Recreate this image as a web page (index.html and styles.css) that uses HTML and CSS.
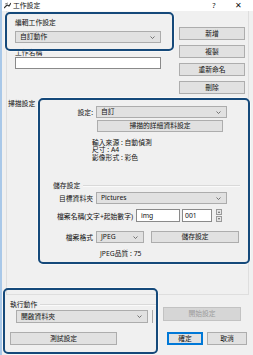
FILE: index.html
```html
<!DOCTYPE html>
<html lang="zh-Hant">
  <head>
    <meta charset="UTF-8" />
    <title>工作設定</title>
    <link rel="stylesheet" href="styles.css">
  </head>
  <body>
    <div class="window">
      <div class="titlebar">
        <svg class="app-icon" viewBox="0 0 7 7">
          <path d="M0 6 L3 3 L5 4 L7 1" fill="none" stroke="#333" stroke-width="1.2" />
          <path d="M1 2 L4 1" stroke="#888" stroke-width="1" />
        </svg>
        <span class="title">工作設定</span>
        <div class="title-btns">
          <span>?</span>
          <span>✕</span>
        </div>
      </div>

      <div class="panel">
        <div class="job">
          <div class="job-fields">
            <div class="field-label">編輯工作設定</div>
            <div class="combo">自訂動作<svg class="caret" viewBox="0 0 5 3"><path d="M0.5 0.5 L2.5 2.5 L4.5 0.5" /></svg></div>
            <div class="field-label name-label">工作名稱</div>
            <div class="textbox"></div>
          </div>
          <div class="job-buttons">
            <button>新增</button>
            <button>複製</button>
            <button>重新命名</button>
            <button>刪除</button>
          </div>
        </div>

        <div class="scan">
          <div class="section-label">掃描設定</div>
          <div class="scan-body">
            <div class="row">
              <span class="row-label">設定:</span>
              <div class="combo wide">自訂<svg class="caret" viewBox="0 0 5 3"><path d="M0.5 0.5 L2.5 2.5 L4.5 0.5" /></svg></div>
            </div>
            <button class="detail-btn">掃描的詳細資料設定</button>
            <div class="info">
              <div>輸入來源 : 自動偵測</div>
              <div>尺寸 : A4</div>
              <div>影像形式 : 彩色</div>
            </div>

            <div class="group save-group">
              <span>儲存設定</span>
              <span class="group-line"></span>
            </div>
            <div class="row folder-row">
              <span class="row-label">目標資料夾</span>
              <div class="combo wide">Pictures<svg class="caret" viewBox="0 0 5 3"><path d="M0.5 0.5 L2.5 2.5 L4.5 0.5" /></svg></div>
            </div>
            <div class="row name-row">
              <span class="row-label name">檔案名稱(文字+起始數字)</span>
              <div class="textbox prefix">img</div>
              <div class="textbox number">001</div>
              <div class="spin">
                <svg viewBox="0 0 6 6"><path d="M1.5 4 L3 2 L4.5 4 Z" /></svg>
                <svg viewBox="0 0 6 6"><path d="M1.5 2 L3 4 L4.5 2 Z" /></svg>
              </div>
            </div>
            <div class="row format-row">
              <span class="row-label">檔案格式</span>
              <div class="combo narrow">JPEG<svg class="caret" viewBox="0 0 5 3"><path d="M0.5 0.5 L2.5 2.5 L4.5 0.5" /></svg></div>
              <button class="save-btn">儲存設定</button>
            </div>
            <div class="quality">JPEG品質 : 75</div>
          </div>
        </div>
      </div>

      <div class="footer">
        <div class="footer-left">
          <div class="group">
            <span>執行動作</span>
            <span class="group-line"></span>
          </div>
          <div class="action-row">
            <div class="combo action">開啟資料夾<svg class="caret" viewBox="0 0 5 3"><path d="M0.5 0.5 L2.5 2.5 L4.5 0.5" /></svg></div>
            <span class="sep"></span>
          </div>
          <button class="test-btn">測試設定</button>
        </div>
        <div class="footer-right">
          <button class="start-btn" disabled>開始設定</button>
          <div class="dialog-btns">
            <button class="ok-btn">確定</button>
            <button class="cancel-btn">取消</button>
          </div>
        </div>
      </div>

      <div class="highlight hl-job"></div>
      <div class="highlight hl-scan"></div>
      <div class="highlight hl-action"></div>
    </div>
  </body>
</html>
```

FILE: styles.css
```css
* {
  margin: 0;
  padding: 0;
  box-sizing: border-box;
}

body {
  width: 253px;
  height: 355px;
  overflow: hidden;
  background: #fff;
  font-family: "Noto Sans", "Noto Sans CJK TC", sans-serif;
  font-size: 6.8px;
  color: #111;
}

.window {
  position: relative;
  width: 253px;
  height: 355px;
  background: #f0f0f0;
  border-left: 2px solid #a9c8e8;
}

/* title bar */
.titlebar {
  height: 11px;
  background: #fff;
  display: flex;
  align-items: center;
  padding-left: 2px;
}

.app-icon {
  width: 7px;
  height: 7px;
}

.title {
  margin-left: 2px;
  line-height: 9px;
}

.title-btns {
  margin-left: auto;
  padding-right: 3px;
  display: flex;
}

.title-btns span {
  width: 24px;
  text-align: center;
  font-size: 7.5px;
  line-height: 9px;
}

/* main panel */
.panel {
  margin-left: 4px;
  width: 243px;
  height: 284px;
  border: 1px solid #dedede;
  border-top: none;
}

.job {
  display: flex;
  padding: 7px 0 0 8px;
}

.job-fields {
  width: 146px;
}

.field-label {
  line-height: 9px;
  margin-bottom: 4px;
}

.name-label {
  margin: 5px 0 0;
}

.combo {
  position: relative;
  height: 12px;
  line-height: 10px;
  padding-left: 4px;
  background: #e1e1e1;
  border: 1px solid #acacac;
  white-space: nowrap;
}

.caret {
  position: absolute;
  right: 5px;
  top: 4px;
  width: 5px;
  height: 3px;
}

.caret path {
  fill: none;
  stroke: #555;
  stroke-width: 0.8;
}

.textbox {
  height: 12px;
  line-height: 10px;
  padding-left: 3px;
  background: #fff;
  border: 1px solid #8a8a8a;
}

button {
  display: block;
  font: inherit;
  color: inherit;
  height: 13px;
  line-height: 11px;
  background: #e1e1e1;
  border: 1px solid #adadad;
  text-align: center;
}

.job-buttons {
  margin: 9px 0 0 18px;
  width: 66px;
}

.job-buttons button {
  width: 66px;
  margin-bottom: 5px;
}

.job-buttons button:last-child {
  margin-bottom: 0;
}

/* scan settings */
.scan {
  display: flex;
  margin-top: 4px;
}

.section-label {
  width: 32px;
  padding: 1px 0 0 1px;
  line-height: 9px;
  white-space: nowrap;
}

.scan-body {
  padding-top: 8px;
}

.row {
  display: flex;
  align-items: center;
}

.row-label {
  width: 54px;
  margin-right: 3px;
  text-align: right;
  white-space: nowrap;
}

.combo.wide {
  width: 131px;
}

.detail-btn {
  margin: 2px 0 0 58px;
  width: 126px;
  height: 12px;
  line-height: 10px;
}

.info {
  margin: 6.5px 0 0 53px;
  line-height: 7.5px;
}

.group {
  display: flex;
  align-items: center;
  line-height: 9px;
  white-space: nowrap;
}

.group-line {
  flex: 1;
  height: 2px;
  margin-left: 3px;
  border-top: 1px solid #d9d9d9;
  border-bottom: 1px solid #fafafa;
}

.save-group {
  margin: 20px 0 0 14px;
  width: 187px;
}

.folder-row {
  margin-top: 2px;
}

.name-row {
  margin-top: 5px;
  height: 13px;
}

.row-label.name {
  width: 94px;
}

.name-row .textbox {
  height: 13px;
  line-height: 11px;
}

.textbox.prefix {
  width: 44px;
  padding-left: 4px;
}

.textbox.number {
  width: 30px;
  margin-left: 2px;
  padding-left: 2px;
}

.spin {
  width: 6px;
  height: 13px;
  margin-left: 4px;
  display: flex;
  flex-direction: column;
  gap: 1px;
}

.spin svg {
  width: 6px;
  height: 6px;
  background: #e6e6e6;
  border: 0.5px solid #9a9a9a;
}

.spin path {
  fill: #333;
}

.format-row {
  margin-top: 9px;
}

.combo.narrow {
  width: 48px;
}

.save-btn {
  width: 88px;
  height: 12px;
  line-height: 10px;
  margin-left: 7px;
}

.quality {
  margin: 5.5px 0 0 61px;
  line-height: 9px;
}

/* bottom area */
.footer {
  display: flex;
  padding: 5px 0 0 8px;
}

.footer-left {
  width: 147px;
}

.action-row {
  display: flex;
  align-items: center;
  margin-top: 1px;
}

.combo.action {
  width: 132px;
  height: 13px;
  line-height: 11px;
  margin-left: 6px;
}

.sep {
  width: 1px;
  height: 13px;
  margin-left: 4px;
  background: #a8a8a8;
}

.test-btn {
  width: 107px;
  margin-top: 9px;
}

.footer-right {
  margin-left: 6px;
}

.start-btn {
  width: 78px;
  height: 14px;
  line-height: 12px;
  margin-top: 7px;
  background: #d6d6d6;
  border-color: #c2c2c2;
  color: #9c9c9c;
}

.dialog-btns {
  display: flex;
  margin-top: 11px;
}

.ok-btn {
  width: 36px;
  margin-left: 4px;
  border-color: #0078d7;
  box-shadow: inset 0 0 0 1px #0078d7;
}

.cancel-btn {
  width: 40px;
  margin-left: 4px;
}

/* annotation frames over the dialog */
.highlight {
  position: absolute;
  border: 2.5px solid #15497a;
  border-radius: 5px;
  box-shadow: 0 0 0 0.5px #fff;
  pointer-events: none;
}

.hl-job {
  left: 3px;
  top: 12px;
  width: 169px;
  height: 39px;
}

.hl-scan {
  left: 36px;
  top: 98px;
  width: 212px;
  height: 166px;
}

.hl-action {
  left: 1px;
  top: 288px;
  width: 155px;
  height: 66px;
}
```
